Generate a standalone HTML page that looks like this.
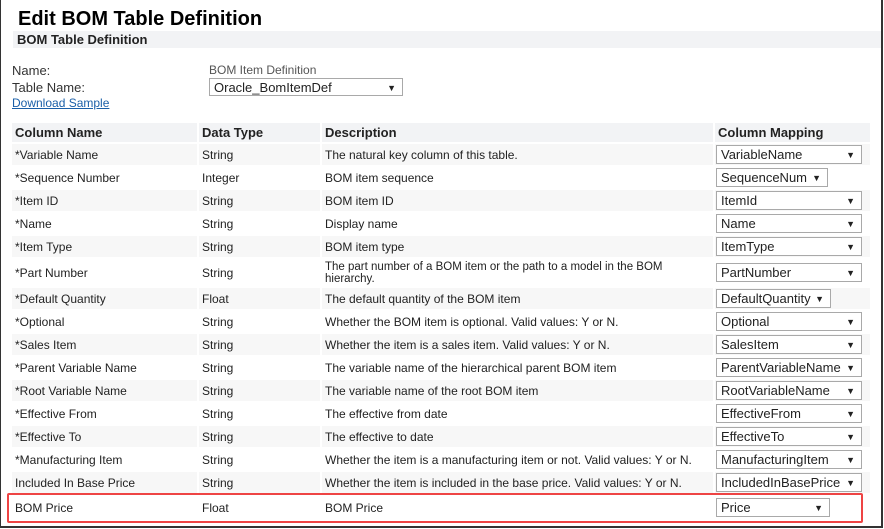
<!DOCTYPE html>
<html><head><style>
body{margin:0;width:884px;height:529px;background:#fff;font-family:"Liberation Sans",Arial,sans-serif;color:#222;position:relative;overflow:hidden}
.frame{position:absolute;left:0;top:-2px;width:880px;height:528px;border-left:1px solid #333;border-right:2px solid #333;border-bottom:2px solid #333}
h1{position:absolute;left:18px;top:8px;margin:0;font-size:20px;font-weight:bold;color:#000}
.sec{position:absolute;left:13px;top:31px;width:864px;height:17px;background:#f2f3f5;font-size:13px;font-weight:bold;padding-left:4px;line-height:17px;color:#222}
.l{position:absolute;font-size:13px;color:#333}
.sel{position:absolute;height:18px;border:1px solid #a9a9a9;background:#fff;font-size:13px;line-height:18px;padding-left:4px;box-sizing:border-box;color:#222}
.sel:after{content:"▼";position:absolute;right:6px;top:0;font-size:9px}
.c{position:absolute;background:#f7f7f7;font-size:12px;display:flex;align-items:center;padding-left:3px;box-sizing:border-box}
.w{background:#fff}
.h{font-size:13px;font-weight:bold;background:#f2f3f5}
.hl{position:absolute;left:7px;top:493px;width:852px;height:26px;border:2px solid #ee4444;border-radius:2px}
</style></head><body>
<div class="frame"></div>
<h1>Edit BOM Table Definition</h1>
<div class="sec">BOM Table Definition</div>
<div class="l" style="left:12px;top:63px">Name:</div>
<div class="l" style="left:12px;top:80px">Table Name:</div>
<div class="l" style="left:12px;top:96px;font-size:12px;color:#1a5fa8;text-decoration:underline">Download Sample</div>
<div class="l" style="left:209px;top:63px;font-size:12px;color:#555">BOM Item Definition</div>
<div class="sel" style="left:209px;top:78px;width:194px;height:18px">Oracle_BomItemDef</div>
<div id="t"></div>
<div class="hl"></div>
<script>
var rows=[
["*Variable Name","String","The natural key column of this table.","VariableName",146],
["*Sequence Number","Integer","BOM item sequence","SequenceNum",112],
["*Item ID","String","BOM item ID","ItemId",146],
["*Name","String","Display name","Name",146],
["*Item Type","String","BOM item type","ItemType",146],
["*Part Number","String","The part number of a BOM item or the path to a model in the BOM hierarchy.","PartNumber",146],
["*Default Quantity","Float","The default quantity of the BOM item","DefaultQuantity",115],
["*Optional","String","Whether the BOM item is optional. Valid values: Y or N.","Optional",146],
["*Sales Item","String","Whether the item is a sales item. Valid values: Y or N.","SalesItem",146],
["*Parent Variable Name","String","The variable name of the hierarchical parent BOM item","ParentVariableName",146],
["*Root Variable Name","String","The variable name of the root BOM item","RootVariableName",146],
["*Effective From","String","The effective from date","EffectiveFrom",146],
["*Effective To","String","The effective to date","EffectiveTo",146],
["*Manufacturing Item","String","Whether the item is a manufacturing item or not. Valid values: Y or N.","ManufacturingItem",146],
["Included In Base Price","String","Whether the item is included in the base price. Valid values: Y or N.","IncludedInBasePrice",146],
["BOM Price","Float","BOM Price","Price",114]];
var xs=[12,199,322,715],ws=[185,121,391,155],h="";
var hd=["Column Name","Data Type","Description","Column Mapping"];
for(var i=0;i<4;i++)h+='<div class="c h" style="left:'+xs[i]+'px;top:123px;width:'+ws[i]+'px;height:19px">'+hd[i]+'</div>';
var y=144;
rows.forEach(function(r,k){var hh=(k==5?27:(k==15?25:21));var cls=(k%2==1||k==15)?'c w':'c';
for(var i=0;i<3;i++){var st='left:'+xs[i]+'px;top:'+y+'px;width:'+ws[i]+'px;height:'+hh+'px;';
if(k==5&&i==2)st+='font-size:11.5px;line-height:12px;';
h+='<div class="'+cls+'" style="'+st+'">'+r[i]+'</div>';}
h+='<div class="'+cls+'" style="left:715px;top:'+y+'px;width:155px;height:'+hh+'px"></div>';
h+='<div class="sel" style="left:716px;top:'+(y+Math.round((hh-19)/2))+'px;width:'+r[4]+'px;height:19px">'+r[3]+'</div>';
y+=hh+2;});
document.getElementById('t').innerHTML=h;
</script>
</body></html>
